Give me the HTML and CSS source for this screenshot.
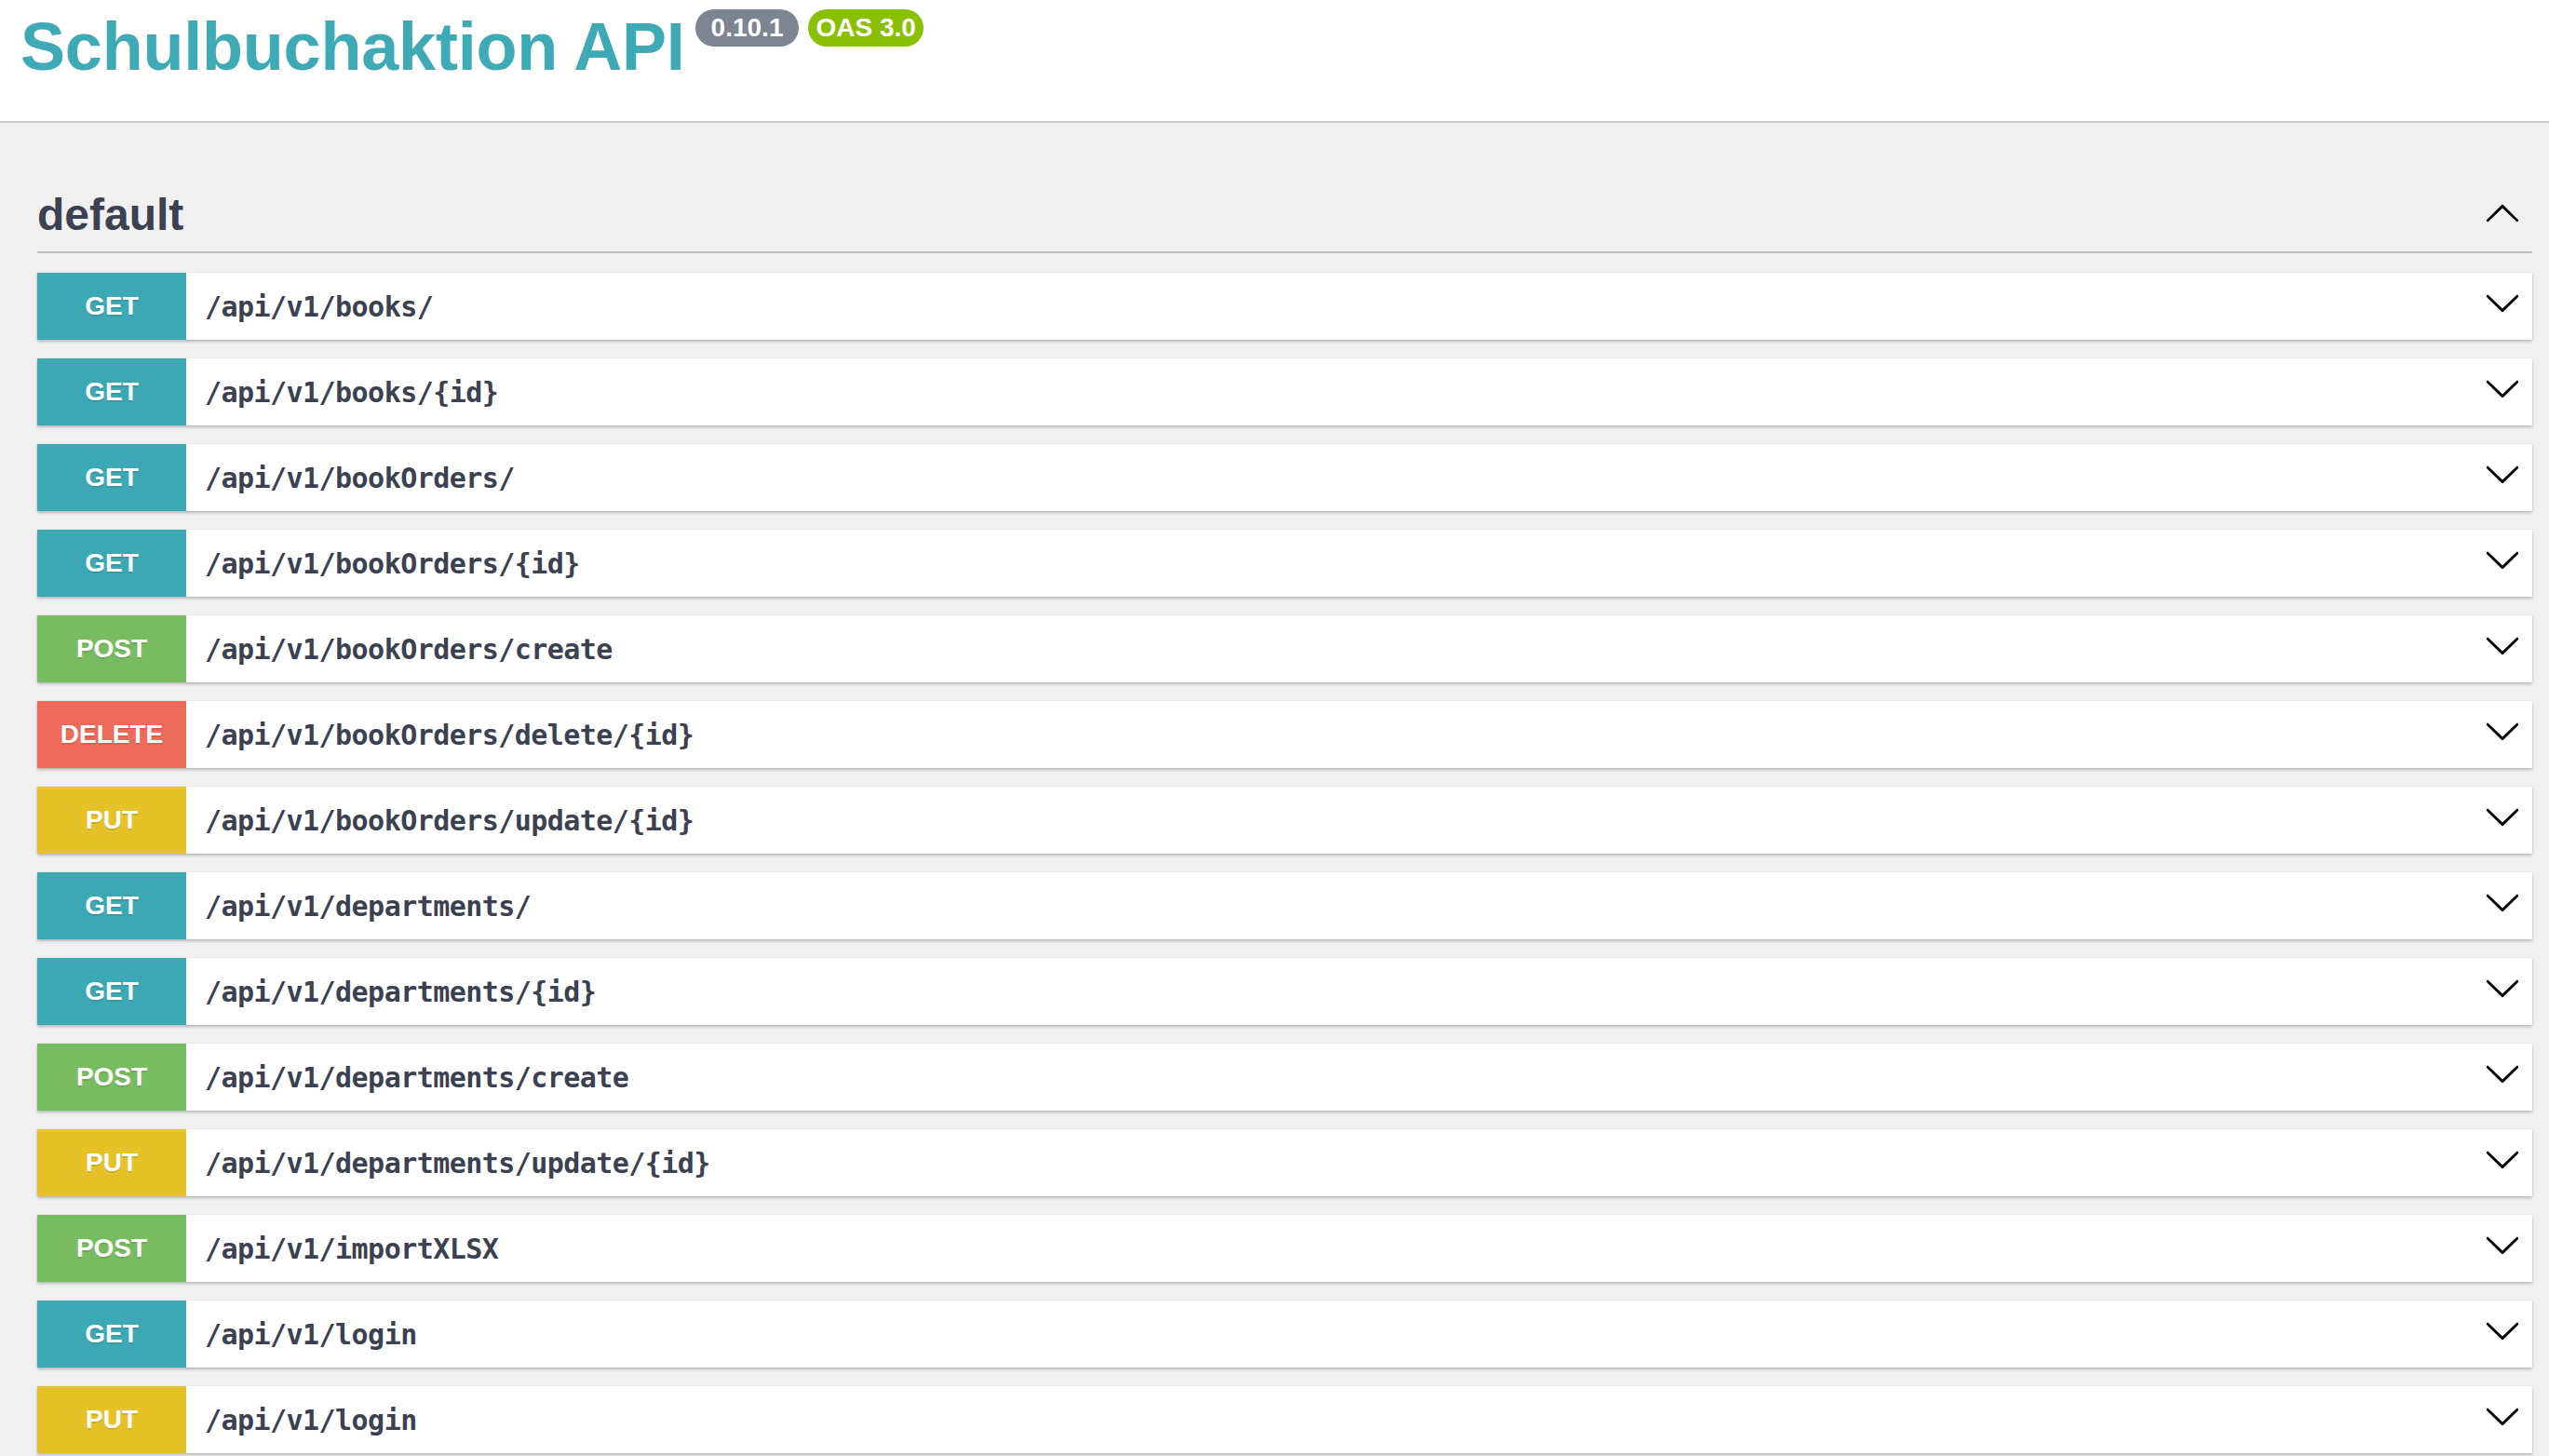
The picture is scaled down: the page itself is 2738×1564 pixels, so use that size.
FILE: index.html
```html
<!DOCTYPE html>
<html lang="de">
<head>
<meta charset="utf-8">
<title>Schulbuchaktion API</title>
<link rel="stylesheet" href="styles.css">
</head>
<body>
<header class="topbar">
  <h1 class="title">Schulbuchaktion API</h1>
  <span class="badge badge-version">0.10.1</span>
  <span class="badge badge-oas">OAS 3.0</span>
</header>
<main class="wrapper">
  <section class="tag-section">
    <div class="tag-header">
      <h2 class="tag-name">default</h2>
      <svg class="arrow arrow-up" viewBox="0 0 20 20" width="40" height="40"><path d="M17.418 14.908c.272.268.709.268.979 0s.271-.701 0-.969l-7.908-7.83c-.27-.268-.707-.268-.979 0l-7.908 7.83c-.27.268-.27.701 0 .969.271.268.709.268.979 0L10 7.767l7.418 7.141z"/></svg>
    </div>
    <div class="ops">
      <div class="op op-get"><span class="method">GET</span><span class="path">/api/v1/books/</span><svg class="arrow" viewBox="0 0 20 20" width="40" height="40"><path d="M17.418 6.109c.272-.268.709-.268.979 0s.271.701 0 .969l-7.908 7.83c-.27.268-.707.268-.979 0l-7.908-7.83c-.27-.268-.27-.701 0-.969.271-.268.709-.268.979 0L10 13.25l7.418-7.141z"/></svg></div>
      <div class="op op-get"><span class="method">GET</span><span class="path">/api/v1/books/{id}</span><svg class="arrow" viewBox="0 0 20 20" width="40" height="40"><path d="M17.418 6.109c.272-.268.709-.268.979 0s.271.701 0 .969l-7.908 7.83c-.27.268-.707.268-.979 0l-7.908-7.83c-.27-.268-.27-.701 0-.969.271-.268.709-.268.979 0L10 13.25l7.418-7.141z"/></svg></div>
      <div class="op op-get"><span class="method">GET</span><span class="path">/api/v1/bookOrders/</span><svg class="arrow" viewBox="0 0 20 20" width="40" height="40"><path d="M17.418 6.109c.272-.268.709-.268.979 0s.271.701 0 .969l-7.908 7.83c-.27.268-.707.268-.979 0l-7.908-7.83c-.27-.268-.27-.701 0-.969.271-.268.709-.268.979 0L10 13.25l7.418-7.141z"/></svg></div>
      <div class="op op-get"><span class="method">GET</span><span class="path">/api/v1/bookOrders/{id}</span><svg class="arrow" viewBox="0 0 20 20" width="40" height="40"><path d="M17.418 6.109c.272-.268.709-.268.979 0s.271.701 0 .969l-7.908 7.83c-.27.268-.707.268-.979 0l-7.908-7.83c-.27-.268-.27-.701 0-.969.271-.268.709-.268.979 0L10 13.25l7.418-7.141z"/></svg></div>
      <div class="op op-post"><span class="method">POST</span><span class="path">/api/v1/bookOrders/create</span><svg class="arrow" viewBox="0 0 20 20" width="40" height="40"><path d="M17.418 6.109c.272-.268.709-.268.979 0s.271.701 0 .969l-7.908 7.83c-.27.268-.707.268-.979 0l-7.908-7.83c-.27-.268-.27-.701 0-.969.271-.268.709-.268.979 0L10 13.25l7.418-7.141z"/></svg></div>
      <div class="op op-delete"><span class="method">DELETE</span><span class="path">/api/v1/bookOrders/delete/{id}</span><svg class="arrow" viewBox="0 0 20 20" width="40" height="40"><path d="M17.418 6.109c.272-.268.709-.268.979 0s.271.701 0 .969l-7.908 7.83c-.27.268-.707.268-.979 0l-7.908-7.83c-.27-.268-.27-.701 0-.969.271-.268.709-.268.979 0L10 13.25l7.418-7.141z"/></svg></div>
      <div class="op op-put"><span class="method">PUT</span><span class="path">/api/v1/bookOrders/update/{id}</span><svg class="arrow" viewBox="0 0 20 20" width="40" height="40"><path d="M17.418 6.109c.272-.268.709-.268.979 0s.271.701 0 .969l-7.908 7.83c-.27.268-.707.268-.979 0l-7.908-7.83c-.27-.268-.27-.701 0-.969.271-.268.709-.268.979 0L10 13.25l7.418-7.141z"/></svg></div>
      <div class="op op-get"><span class="method">GET</span><span class="path">/api/v1/departments/</span><svg class="arrow" viewBox="0 0 20 20" width="40" height="40"><path d="M17.418 6.109c.272-.268.709-.268.979 0s.271.701 0 .969l-7.908 7.83c-.27.268-.707.268-.979 0l-7.908-7.83c-.27-.268-.27-.701 0-.969.271-.268.709-.268.979 0L10 13.25l7.418-7.141z"/></svg></div>
      <div class="op op-get"><span class="method">GET</span><span class="path">/api/v1/departments/{id}</span><svg class="arrow" viewBox="0 0 20 20" width="40" height="40"><path d="M17.418 6.109c.272-.268.709-.268.979 0s.271.701 0 .969l-7.908 7.83c-.27.268-.707.268-.979 0l-7.908-7.83c-.27-.268-.27-.701 0-.969.271-.268.709-.268.979 0L10 13.25l7.418-7.141z"/></svg></div>
      <div class="op op-post"><span class="method">POST</span><span class="path">/api/v1/departments/create</span><svg class="arrow" viewBox="0 0 20 20" width="40" height="40"><path d="M17.418 6.109c.272-.268.709-.268.979 0s.271.701 0 .969l-7.908 7.83c-.27.268-.707.268-.979 0l-7.908-7.83c-.27-.268-.27-.701 0-.969.271-.268.709-.268.979 0L10 13.25l7.418-7.141z"/></svg></div>
      <div class="op op-put"><span class="method">PUT</span><span class="path">/api/v1/departments/update/{id}</span><svg class="arrow" viewBox="0 0 20 20" width="40" height="40"><path d="M17.418 6.109c.272-.268.709-.268.979 0s.271.701 0 .969l-7.908 7.83c-.27.268-.707.268-.979 0l-7.908-7.83c-.27-.268-.27-.701 0-.969.271-.268.709-.268.979 0L10 13.25l7.418-7.141z"/></svg></div>
      <div class="op op-post"><span class="method">POST</span><span class="path">/api/v1/importXLSX</span><svg class="arrow" viewBox="0 0 20 20" width="40" height="40"><path d="M17.418 6.109c.272-.268.709-.268.979 0s.271.701 0 .969l-7.908 7.83c-.27.268-.707.268-.979 0l-7.908-7.83c-.27-.268-.27-.701 0-.969.271-.268.709-.268.979 0L10 13.25l7.418-7.141z"/></svg></div>
      <div class="op op-get"><span class="method">GET</span><span class="path">/api/v1/login</span><svg class="arrow" viewBox="0 0 20 20" width="40" height="40"><path d="M17.418 6.109c.272-.268.709-.268.979 0s.271.701 0 .969l-7.908 7.83c-.27.268-.707.268-.979 0l-7.908-7.83c-.27-.268-.27-.701 0-.969.271-.268.709-.268.979 0L10 13.25l7.418-7.141z"/></svg></div>
      <div class="op op-put"><span class="method">PUT</span><span class="path">/api/v1/login</span><svg class="arrow" viewBox="0 0 20 20" width="40" height="40"><path d="M17.418 6.109c.272-.268.709-.268.979 0s.271.701 0 .969l-7.908 7.83c-.27.268-.707.268-.979 0l-7.908-7.83c-.27-.268-.27-.701 0-.969.271-.268.709-.268.979 0L10 13.25l7.418-7.141z"/></svg></div>
    </div>
  </section>
</main>
</body>
</html>
```
FILE: styles.css
```css
html, body {
  margin: 0;
  padding: 0;
}
body {
  background: #f0f0f0;
  font-family: "Liberation Sans", Arial, sans-serif;
  color: #3b4151;
}
.topbar {
  background: #ffffff;
  height: 130px;
  border-bottom: 2px solid #cdcdcd;
  display: flex;
  align-items: flex-start;
  padding-left: 22px;
  box-sizing: content-box;
}
.title {
  margin: 14px 0 0 0;
  font-size: 72px;
  line-height: 72px;
  font-weight: 700;
  letter-spacing: -0.2px;
  color: #3eaab6;
}
.badge {
  margin-top: 10px;
  height: 40px;
  line-height: 40px;
  border-radius: 20px;
  font-size: 28px;
  font-weight: 700;
  color: #ffffff;
  white-space: nowrap;
}
.badge-version {
  margin-left: 11px;
  padding: 0 17px;
  background: #7d8492;
}
.badge-oas {
  margin-left: 10px;
  padding: 0 8px;
  background: #89bf04;
}
.wrapper {
  padding: 0 18px 0 40px;
}
.tag-section {
  padding-top: 69px;
}
.tag-header {
  display: flex;
  align-items: center;
  justify-content: space-between;
  padding: 0 12px 9px 0;
  border-bottom: 2px solid #babcc0;
}
.tag-name {
  margin: 0;
  font-size: 48px;
  line-height: 60px;
  font-weight: 700;
  color: #3b4151;
}
.arrow {
  display: block;
  flex: none;
  fill: #000000;
}
.arrow-up {
  margin-bottom: 7px;
}
.ops {
  padding-top: 21px;
}
.op {
  display: flex;
  align-items: center;
  height: 72px;
  margin-bottom: 20px;
  background: #ffffff;
  box-shadow: 0 2px 3px rgba(0, 0, 0, 0.22), 0 0 2px rgba(0, 0, 0, 0.08);
}
.method {
  flex: none;
  align-self: stretch;
  width: 160px;
  display: flex;
  align-items: center;
  justify-content: center;
  font-size: 28px;
  font-weight: 700;
  color: #ffffff;
  text-shadow: 0 2px 0 rgba(0, 0, 0, 0.1);
}
.op-get .method { background: #3ba8b4; }
.op-post .method { background: #78bc61; }
.op-delete .method { background: #ee6a5b; }
.op-put .method { background: #e4c228; }
.path {
  flex: 1;
  padding: 0 20px;
  font-family: "DejaVu Sans Mono", "Liberation Mono", monospace;
  font-size: 30px;
  letter-spacing: -0.55px;
  font-weight: 600;
  color: #3b4151;
  white-space: nowrap;
}
.op .arrow {
  margin: 0 12px 8px 0;
}
```
